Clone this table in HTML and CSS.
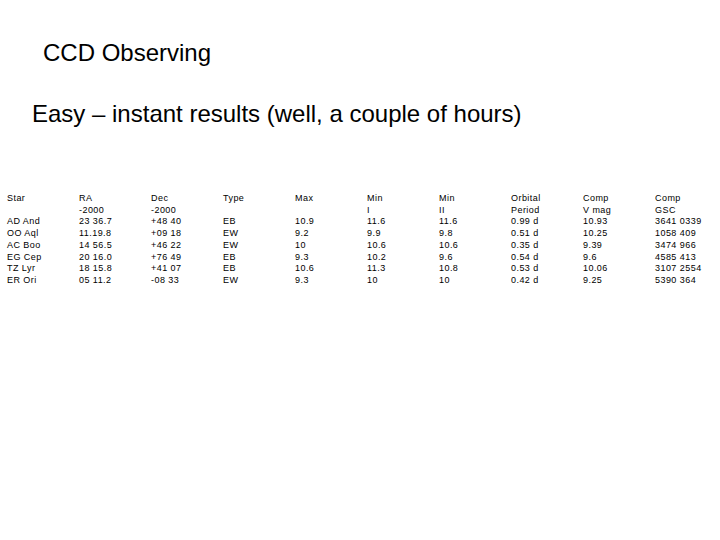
FILE: index.html
```html
<!DOCTYPE html>
<html>
<head>
<meta charset="utf-8">
<link rel="stylesheet" href="styles.css">
</head>
<body>
<div class="slide">
  <h1 class="title">CCD Observing</h1>
  <p class="subtitle">Easy – instant results (well, a couple of hours)</p>
  <div class="table">
    <div class="col"><div>Star</div><div>&nbsp;</div><div>AD And</div><div>OO Aql</div><div>AC Boo</div><div>EG Cep</div><div>TZ Lyr</div><div>ER Ori</div></div>
    <div class="col"><div>RA</div><div>-2000</div><div>23 36.7</div><div>11.19.8</div><div>14 56.5</div><div>20 16.0</div><div>18 15.8</div><div>05 11.2</div></div>
    <div class="col"><div>Dec</div><div>-2000</div><div>+48 40</div><div>+09 18</div><div>+46 22</div><div>+76 49</div><div>+41 07</div><div>-08 33</div></div>
    <div class="col"><div>Type</div><div>&nbsp;</div><div>EB</div><div>EW</div><div>EW</div><div>EB</div><div>EB</div><div>EW</div></div>
    <div class="col"><div>Max</div><div>&nbsp;</div><div>10.9</div><div>9.2</div><div>10</div><div>9.3</div><div>10.6</div><div>9.3</div></div>
    <div class="col"><div>Min</div><div>I</div><div>11.6</div><div>9.9</div><div>10.6</div><div>10.2</div><div>11.3</div><div>10</div></div>
    <div class="col"><div>Min</div><div>II</div><div>11.6</div><div>9.8</div><div>10.6</div><div>9.6</div><div>10.8</div><div>10</div></div>
    <div class="col"><div>Orbital</div><div>Period</div><div>0.99 d</div><div>0.51 d</div><div>0.35 d</div><div>0.54 d</div><div>0.53 d</div><div>0.42 d</div></div>
    <div class="col"><div>Comp</div><div>V mag</div><div>10.93</div><div>10.25</div><div>9.39</div><div>9.6</div><div>10.06</div><div>9.25</div></div>
    <div class="col"><div>Comp</div><div>GSC</div><div>3641 0339</div><div>1058 409</div><div>3474 966</div><div>4585 413</div><div>3107 2554</div><div>5390 364</div></div>
  </div>
</div>
</body>
</html>
```

FILE: styles.css
```css
html, body {
  margin: 0;
  padding: 0;
  background: #ffffff;
}
.slide {
  width: 720px;
  height: 540px;
  font-family: "Liberation Sans", Arial, sans-serif;
  color: #000000;
  padding-top: 39px;
  box-sizing: border-box;
}
.title {
  margin: 0 0 0 43px;
  font-size: 24px;
  font-weight: normal;
  line-height: 28px;
}
.subtitle {
  margin: 33px 0 0 32px;
  font-size: 24px;
  line-height: 28px;
}
.table {
  margin: 65px 0 0 7px;
  display: grid;
  grid-template-columns: repeat(9, 72px) auto;
  font-size: 9px;
  line-height: 11.7px;
  letter-spacing: 0.45px;
}
.col div {
  white-space: nowrap;
}
```
